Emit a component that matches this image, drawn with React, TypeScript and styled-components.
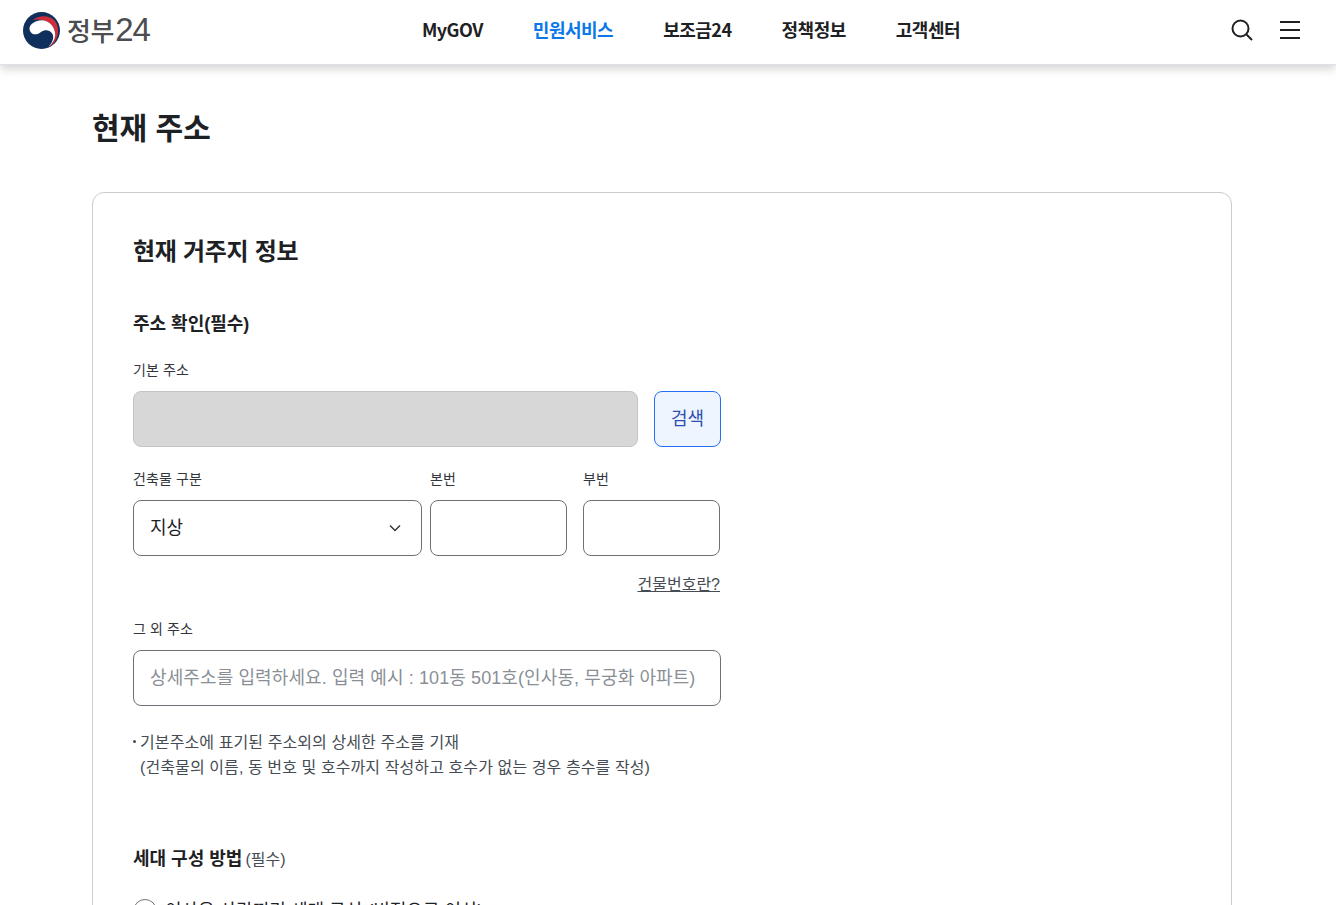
import styled, { createGlobalStyle } from 'styled-components';

const GlobalStyle = createGlobalStyle`
  html, body {
    margin: 0;
    height: 905px;
    overflow: hidden;
    background: #fff;
  }
  body {
    font-family: "Liberation Sans", "Noto Sans CJK KR", sans-serif;
    color: #1e2124;
  }
  * { box-sizing: border-box; }
`;

const Header = styled.header`
  position: relative;
  z-index: 2;
  height: 65px;
  padding: 0 35px 4px 23px;
  display: grid;
  grid-template-columns: 1fr auto 1fr;
  align-items: center;
  background: #fff;
  border-bottom: 1px solid #e0e1e8;
  box-shadow: 0 3px 10px rgba(0, 0, 0, 0.2);
`;

const Logo = styled.a`
  display: flex;
  align-items: center;
  gap: 7px;
  color: #4b4d50;
`;

const LogoText = styled.span`
  display: flex;
  align-items: center;
  height: 36px;
  margin-top: -1px;
  font-family: "Noto Sans CJK KR", sans-serif;
  font-size: 26px;
  font-weight: 500;
  letter-spacing: -0.3px;
  line-height: 36px;
`;

const LogoDigits = styled.span`
  margin-left: 1px;
  font-family: "Liberation Sans", sans-serif;
  font-size: 33px;
  letter-spacing: -1.2px;
`;

const Nav = styled.nav`
  display: flex;
  gap: 50px;
  transform: translate(29px, -1px);
`;

const NavItem = styled.a<{ $active?: boolean }>`
  font-family: "Noto Sans CJK KR", sans-serif;
  font-size: 18px;
  font-weight: 700;
  letter-spacing: -0.5px;
  line-height: 26px;
  color: ${(p) => (p.$active ? '#0b78e8' : '#1e2124')};
`;

const HeaderTools = styled.div`
  display: flex;
  justify-content: flex-end;
  align-items: center;
  gap: 25px;
`;

const IconButton = styled.button`
  display: flex;
  padding: 0;
  border: 0;
  background: none;
`;

const Main = styled.main`
  width: 1140px;
  margin-left: 92px;
`;

const PageTitle = styled.h1`
  margin: 42px 0 41px;
  font-size: 30px;
  font-weight: 700;
  line-height: 44px;
`;

const Card = styled.section`
  padding: 41px 40px 39px;
  border: 1px solid #cccccc;
  border-radius: 12px;
`;

const CardTitle = styled.h2`
  margin: 0 0 40px;
  font-size: 24px;
  font-weight: 700;
  line-height: 36px;
  letter-spacing: -0.3px;
`;

const SectionTitle = styled.h3`
  margin: 0;
  font-size: 18px;
  font-weight: 700;
  line-height: 28px;
`;

const Required = styled.span`
  margin-left: -2px;
  font-size: 16px;
  font-weight: 400;
  color: #464c53;
`;

const FormColumn = styled.div`
  width: 588px;
  margin-top: 22px;
`;

const FieldLabel = styled.label`
  display: block;
  height: 20px;
  margin-bottom: 11px;
  font-size: 14px;
  line-height: 20px;
  letter-spacing: 0.1px;
  color: #33363d;
`;

const SearchRow = styled.div`
  display: flex;
  gap: 16px;
`;

const DisabledInput = styled.div`
  flex: 1;
  height: 56px;
  background: #d7d7d7;
  border: 1px solid #c4c4c4;
  border-radius: 8px;
`;

const SearchButton = styled.button`
  width: 67px;
  height: 56px;
  padding: 0 0 4px;
  font: inherit;
  font-size: 18px;
  color: #2f4db0;
  background: #eef5ff;
  border: 1px solid #256ef4;
  border-radius: 8px;
`;

const BuildingRow = styled.div`
  display: flex;
  gap: 8px;
  margin-top: 22px;
`;

const BuildingType = styled.div`
  width: 289px;
`;

const NumberFields = styled.div`
  display: flex;
  gap: 16px;
`;

const NumberField = styled.div`
  width: 137px;
`;

const SelectBox = styled.div`
  height: 56px;
  padding: 0 19px 0 16px;
  display: flex;
  align-items: center;
  justify-content: space-between;
  font-size: 18px;
  border: 1px solid #6d7278;
  border-radius: 8px;
`;

const SelectValue = styled.span`
  margin-top: -4px;
`;

const TextBox = styled.input`
  display: block;
  width: 100%;
  height: 56px;
  padding: 0 16px;
  font: inherit;
  font-size: 18px;
  letter-spacing: 0.1px;
  background: #fff;
  border: 1px solid #6d7278;
  border-radius: 8px;
  &::placeholder {
    color: #8a8f96;
    opacity: 1;
  }
`;

const HelpRow = styled.div`
  display: flex;
  justify-content: flex-end;
  margin: 18px 1px 0 0;
`;

const HelpLink = styled.a`
  font-size: 16px;
  line-height: 22px;
  color: #464c53;
  text-decoration: underline;
`;

const OtherField = styled.div`
  margin-top: 23px;
`;

const Notes = styled.ul`
  margin: 24px 0 0;
  padding: 0;
  list-style: none;
  font-size: 16px;
  line-height: 25px;
  letter-spacing: 0.1px;
  color: #464c53;
`;

const Note = styled.li`
  position: relative;
  padding-left: 7px;
  &::before {
    content: '';
    position: absolute;
    left: 0;
    top: 10px;
    width: 3px;
    height: 3px;
    border-radius: 50%;
    background: #464c53;
  }
`;

const HouseholdBlock = styled.div`
  margin-top: 65px;
`;

const RadioRow = styled.label`
  display: flex;
  align-items: center;
  gap: 8px;
  margin-top: 25px;
  font-size: 18px;
  line-height: 24px;
`;

const RadioCircle = styled.span`
  width: 24px;
  height: 24px;
  border: 1px solid #6d7278;
  border-radius: 50%;
`;

function TaegukMark() {
  return (
    <svg width="37" height="37" viewBox="0 0 37 37" aria-hidden="true">
      <circle cx="18.5" cy="18.5" r="18.5" fill="#0f2f5d" />
      <path d="M10 8 C16 3 27 3 32 9 C38 17 35 30 26 35.5 C32 29 34 21 30 15 C26 9 17 6 10 8 Z" fill="#cd2e3a" />
      <path d="M6.5 16 C7.5 11 16 6 24 9.5 C31 13 34.5 22 30.5 29 C29 31.5 27.5 33.5 25.5 34.8 C29 31 31.5 26 29.5 22 C27.5 18 22 17 18 20 C15 22.5 10.5 23.5 8 20.5 C7 19 6.3 17.5 6.5 16 Z" fill="#fff" />
    </svg>
  );
}

function SearchIcon() {
  return (
    <svg width="24" height="24" viewBox="0 0 24 24" fill="none" stroke="#1e2124" strokeWidth="2" aria-hidden="true">
      <circle cx="10.5" cy="10.5" r="8" />
      <path d="M16.5 16.5 L22 22" />
    </svg>
  );
}

function MenuIcon() {
  return (
    <svg width="22" height="20" viewBox="0 0 22 20" stroke="#1e2124" strokeWidth="2" aria-hidden="true">
      <path d="M1 2 H21 M1 10 H21 M1 18 H21" />
    </svg>
  );
}

function ChevronDown() {
  return (
    <svg width="14" height="14" viewBox="0 0 14 14" fill="none" stroke="#33363d" strokeWidth="1.5" aria-hidden="true">
      <path d="M2 4.5 L7 9.5 L12 4.5" />
    </svg>
  );
}

export default function App() {
  return (
    <>
      <GlobalStyle />
      <Header>
        <Logo>
          <TaegukMark />
          <LogoText>
            정부<LogoDigits>24</LogoDigits>
          </LogoText>
        </Logo>
        <Nav>
          <NavItem>MyGOV</NavItem>
          <NavItem $active>민원서비스</NavItem>
          <NavItem>보조금24</NavItem>
          <NavItem>정책정보</NavItem>
          <NavItem>고객센터</NavItem>
        </Nav>
        <HeaderTools>
          <IconButton aria-label="검색">
            <SearchIcon />
          </IconButton>
          <IconButton aria-label="메뉴">
            <MenuIcon />
          </IconButton>
        </HeaderTools>
      </Header>
      <Main>
        <PageTitle>현재 주소</PageTitle>
        <Card>
          <CardTitle>현재 거주지 정보</CardTitle>
          <SectionTitle>주소 확인(필수)</SectionTitle>
          <FormColumn>
            <FieldLabel>기본 주소</FieldLabel>
            <SearchRow>
              <DisabledInput />
              <SearchButton>검색</SearchButton>
            </SearchRow>
            <BuildingRow>
              <BuildingType>
                <FieldLabel>건축물 구분</FieldLabel>
                <SelectBox>
                  <SelectValue>지상</SelectValue>
                  <ChevronDown />
                </SelectBox>
              </BuildingType>
              <NumberFields>
                <NumberField>
                  <FieldLabel>본번</FieldLabel>
                  <TextBox />
                </NumberField>
                <NumberField>
                  <FieldLabel>부번</FieldLabel>
                  <TextBox />
                </NumberField>
              </NumberFields>
            </BuildingRow>
            <HelpRow>
              <HelpLink>건물번호란?</HelpLink>
            </HelpRow>
            <OtherField>
              <FieldLabel>그 외 주소</FieldLabel>
              <TextBox placeholder="상세주소를 입력하세요. 입력 예시 : 101동 501호(인사동, 무궁화 아파트)" />
            </OtherField>
            <Notes>
              <Note>
                기본주소에 표기된 주소외의 상세한 주소를 기재
                <br />
                (건축물의 이름, 동 번호 및 호수까지 작성하고 호수가 없는 경우 층수를 작성)
              </Note>
            </Notes>
          </FormColumn>
          <HouseholdBlock>
            <SectionTitle>
              세대 구성 방법 <Required>(필수)</Required>
            </SectionTitle>
            <RadioRow>
              <RadioCircle />
              이사온 사람끼리 세대 구성 (비정으로 이상)
            </RadioRow>
          </HouseholdBlock>
        </Card>
      </Main>
    </>
  );
}
